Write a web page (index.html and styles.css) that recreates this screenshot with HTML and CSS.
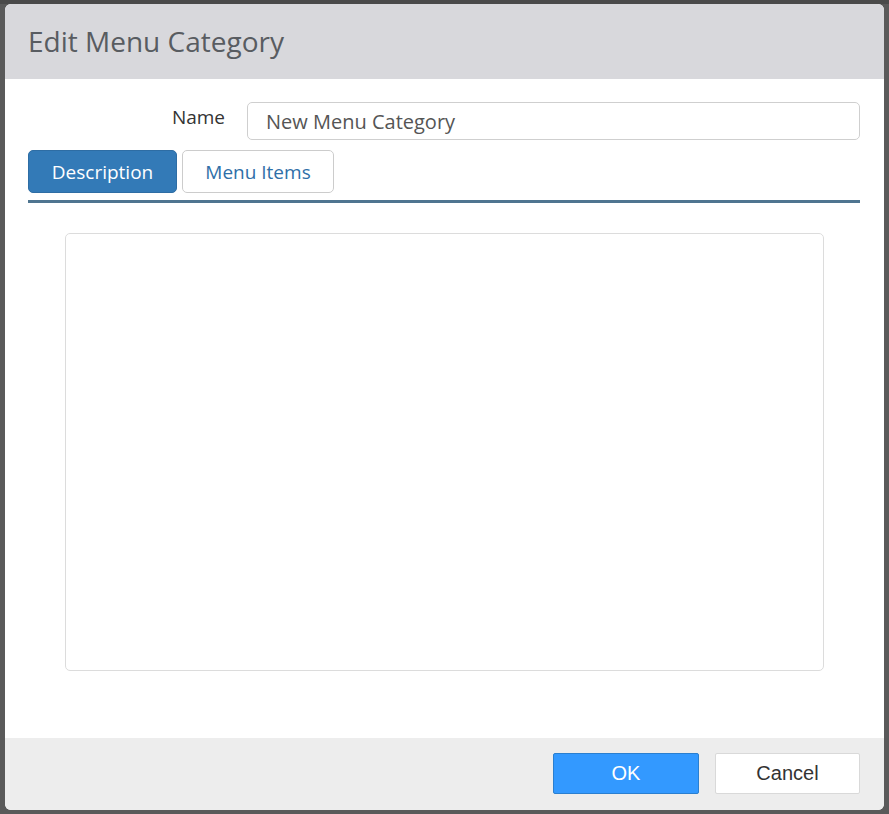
FILE: index.html
```html
<!DOCTYPE html>
<html>
<head>
<meta charset="utf-8">
<link rel="stylesheet" href="styles.css">
</head>
<body>
<div class="backdrop-strip"></div>
<div class="dialog">
  <div class="dialog-header">
    <h1 class="dialog-title">Edit Menu Category</h1>
  </div>
  <div class="dialog-body">
    <div class="field-row">
      <label class="field-label">Name</label>
      <div class="field-input">New Menu Category</div>
    </div>
    <div class="tab-bar">
      <button class="tab tab-active">Description</button>
      <button class="tab">Menu Items</button>
    </div>
    <div class="tab-content">
      <div class="editor-box"></div>
    </div>
  </div>
  <div class="dialog-footer">
    <button class="btn btn-ok">OK</button>
    <button class="btn btn-cancel">Cancel</button>
  </div>
</div>
</body>
</html>
```
FILE: styles.css
```css
html, body {
  margin: 0;
  padding: 0;
}
body {
  background: #5a5a5a;
  width: 889px;
  height: 814px;
  overflow: hidden;
  font-family: "Open Sans", "Noto Sans", sans-serif;
}
.backdrop-strip {
  height: 4px;
  background: #4a4a4a;
}
.dialog {
  margin: 0 5px;
  width: 879px;
  height: 806px;
  background: #ffffff;
  border-radius: 6px;
  overflow: hidden;
  display: flex;
  flex-direction: column;
}
.dialog-header {
  height: 75px;
  background: #d8d8dc;
  display: flex;
  align-items: center;
  padding-left: 23px;
  flex: none;
}
.dialog-title {
  margin: 0;
  font-weight: 400;
  font-size: 28px;
  color: #585c61;
  letter-spacing: 0;
  line-height: 1;
  padding-bottom: 2px;
}
.dialog-body {
  flex: 1;
  padding: 23px 24px 0 23px;
  display: flex;
  flex-direction: column;
}
.field-row {
  display: flex;
  align-items: flex-start;
  gap: 22px;
}
.field-label {
  width: 197px;
  text-align: right;
  font-size: 19px;
  color: #333;
  line-height: 24px;
  padding-top: 3px;
}
.field-input {
  flex: 1;
  height: 36px;
  border: 1px solid #cfcfcf;
  border-radius: 5px;
  box-sizing: content-box;
  padding: 0 18px;
  font-size: 20px;
  color: #555;
  line-height: 38px;
}
.tab-bar {
  margin-top: 10px;
  display: flex;
  gap: 5px;
  padding-bottom: 7px;
  border-bottom: 3px solid #4f7590;
}
.tab {
  font-family: "Open Sans", "Noto Sans", sans-serif;
  font-size: 19px;
  height: 43px;
  padding: 0 22px;
  width: 152px;
  border-radius: 5px;
  border: 1px solid #cccccc;
  background: #ffffff;
  color: #2f6fa8;
  cursor: pointer;
}
.tab-active {
  background: #337ab7;
  border-color: #2e6da4;
  color: #ffffff;
  width: 149px;
}
.tab-content {
  padding: 30px 36px 0 37px;
}
.editor-box {
  height: 436px;
  border: 1px solid #dcdcdc;
  border-radius: 5px;
}
.dialog-footer {
  flex: none;
  height: 72px;
  background: #ededed;
  display: flex;
  justify-content: flex-end;
  align-items: flex-start;
  gap: 16px;
  padding: 15px 24px 0 0;
  box-sizing: border-box;
}
.btn {
  font-family: "Liberation Sans", Arial, sans-serif;
  font-size: 20px;
  height: 41px;
  border-radius: 2px;
  cursor: pointer;
}
.btn-ok {
  width: 146px;
  background: #3399ff;
  border: 1px solid #2a7fd0;
  color: #ffffff;
}
.btn-cancel {
  width: 145px;
  background: #ffffff;
  border: 1px solid #d9d9d9;
  color: #333333;
}
```
